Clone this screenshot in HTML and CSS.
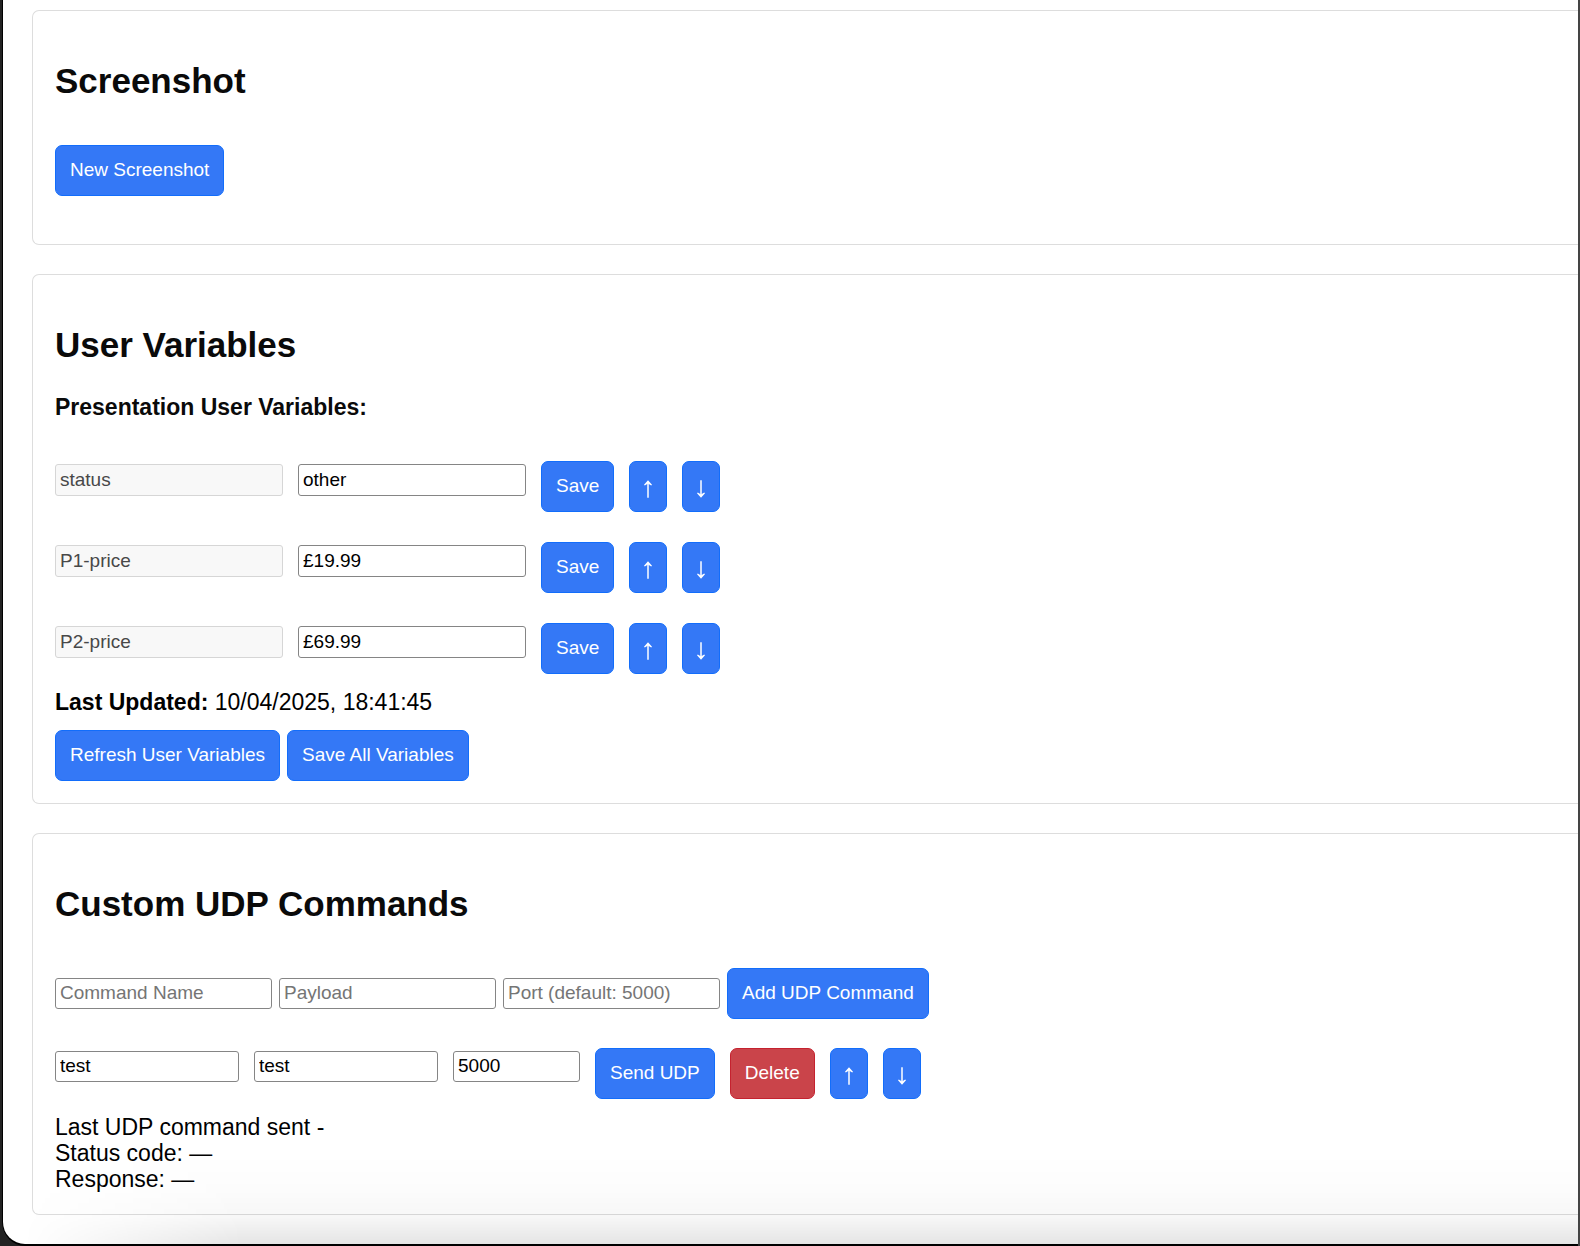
FILE: index.html
```html
<!DOCTYPE html>
<html lang="en">
<head>
<meta charset="utf-8">
<meta name="viewport" content="width=device-width, initial-scale=1">
<title>Presentation Control</title>
<link rel="stylesheet" href="styles.css">
</head>
<body>
<svg class="symbols" aria-hidden="true">
  <symbol id="arrow-up" viewBox="0 0 10 18">
    <path d="M5 17.8V2.5" fill="none" stroke="currentColor" stroke-width="1.5"/>
    <path d="M5 0.2 9 4.8 8.2 5.6 5 3.4 1.8 5.6 1 4.8Z" fill="currentColor"/>
  </symbol>
  <symbol id="arrow-down" viewBox="0 0 10 18">
    <path d="M5 0.2V15.5" fill="none" stroke="currentColor" stroke-width="1.5"/>
    <path d="M5 17.8 9 13.2 8.2 12.4 5 14.6 1.8 12.4 1 13.2Z" fill="currentColor"/>
  </symbol>
</svg>
<main class="window">
  <section class="panel">
    <h2 class="panel-title">Screenshot</h2>
    <div class="controls controls-only">
      <button type="button" class="btn">New Screenshot</button>
    </div>
  </section>

  <section class="panel">
    <h2 class="panel-title">User Variables</h2>
    <h3 class="panel-subtitle">Presentation User Variables:</h3>
    <div class="rows">
      <div class="row">
        <input class="field field-variable" type="text" value="status" aria-label="Variable name" disabled>
        <input class="field field-variable" type="text" value="other" aria-label="status value">
        <button type="button" class="btn">Save</button>
        <button type="button" class="btn btn-icon" aria-label="Move up"><svg class="arrow"><use href="#arrow-up"/></svg></button>
        <button type="button" class="btn btn-icon" aria-label="Move down"><svg class="arrow"><use href="#arrow-down"/></svg></button>
      </div>
      <div class="row">
        <input class="field field-variable" type="text" value="P1-price" aria-label="Variable name" disabled>
        <input class="field field-variable" type="text" value="£19.99" aria-label="P1-price value">
        <button type="button" class="btn">Save</button>
        <button type="button" class="btn btn-icon" aria-label="Move up"><svg class="arrow"><use href="#arrow-up"/></svg></button>
        <button type="button" class="btn btn-icon" aria-label="Move down"><svg class="arrow"><use href="#arrow-down"/></svg></button>
      </div>
      <div class="row">
        <input class="field field-variable" type="text" value="P2-price" aria-label="Variable name" disabled>
        <input class="field field-variable" type="text" value="£69.99" aria-label="P2-price value">
        <button type="button" class="btn">Save</button>
        <button type="button" class="btn btn-icon" aria-label="Move up"><svg class="arrow"><use href="#arrow-up"/></svg></button>
        <button type="button" class="btn btn-icon" aria-label="Move down"><svg class="arrow"><use href="#arrow-down"/></svg></button>
      </div>
    </div>
    <p class="status"><strong>Last Updated:</strong> 10/04/2025, 18:41:45</p>
    <div class="actions">
      <button type="button" class="btn">Refresh User Variables</button>
      <button type="button" class="btn">Save All Variables</button>
    </div>
  </section>

  <section class="panel">
    <h2 class="panel-title">Custom UDP Commands</h2>
    <form class="controls">
      <input class="field field-new" type="text" placeholder="Command Name" aria-label="Command Name">
      <input class="field field-new" type="text" placeholder="Payload" aria-label="Payload">
      <input class="field field-new" type="text" placeholder="Port (default: 5000)" aria-label="Port">
      <button type="button" class="btn">Add UDP Command</button>
    </form>
    <div class="row">
      <input class="field field-command" type="text" value="test" aria-label="Command name">
      <input class="field field-command" type="text" value="test" aria-label="Command payload">
      <input class="field field-port" type="text" value="5000" aria-label="Command port">
      <button type="button" class="btn">Send UDP</button>
      <button type="button" class="btn btn-danger">Delete</button>
      <button type="button" class="btn btn-icon" aria-label="Move up"><svg class="arrow"><use href="#arrow-up"/></svg></button>
      <button type="button" class="btn btn-icon" aria-label="Move down"><svg class="arrow"><use href="#arrow-down"/></svg></button>
    </div>
    <p class="status">Last UDP command sent -<br>Status code: —<br>Response: —</p>
  </section>
</main>
</body>
</html>
```
FILE: styles.css
```css
* {
  box-sizing: border-box;
}

body {
  margin: 0;
  padding: 0 2px 2px 3px;
  background: linear-gradient(to right, #222 50%, #444 50%);
  color: #000;
  font: 23px/26px "Liberation Sans", Arial, sans-serif;
}

.symbols {
  display: none;
}

.window {
  position: relative;
  display: flex;
  flex-direction: column;
  gap: 29px;
  padding: 10px 0 29px 29px;
  background: #fff;
  border-bottom-left-radius: 22px;
  box-shadow: -1px 0 0 #000, 0 2px 0 #000;
}

/* Soft shade along the lower edge of the window */
.window::after {
  content: "";
  position: absolute;
  inset: auto 0 0 0;
  height: 90px;
  border-bottom-left-radius: 22px;
  background: linear-gradient(to bottom, rgba(0, 0, 0, 0), rgba(0, 0, 0, 0.01) 40%, rgba(0, 0, 0, 0.03) 70%, rgba(0, 0, 0, 0.1));
  -webkit-mask-image: linear-gradient(to right, transparent 20px, #000 240px);
  mask-image: linear-gradient(to right, transparent 20px, #000 240px);
  pointer-events: none;
}

.panel {
  display: flex;
  flex-direction: column;
  padding: 22px;
  border: 1px solid #ddd;
  border-right: 0;
  border-radius: 7px 0 0 7px;
}

.panel-title {
  margin: 28px 0 29px;
  font-size: 35px;
  line-height: 40px;
  color: #0a0a0a;
}

.panel-subtitle {
  margin: 0 0 41px;
  font-size: 23px;
  line-height: 26px;
  color: #0a0a0a;
}

.controls {
  display: flex;
  flex-wrap: wrap;
  align-items: center;
  gap: 7px;
  margin: 15px 0 29px;
}

.controls-only {
  margin-bottom: 26px;
}

.rows {
  display: flex;
  flex-direction: column;
  gap: 30px;
}

.row {
  display: flex;
  flex-wrap: wrap;
  align-items: flex-start;
  gap: 15px;
}

.row .field {
  margin-top: 3px;
}

.status {
  margin: 15px 0 0;
}

.actions {
  display: flex;
  flex-wrap: wrap;
  gap: 7px;
  margin-top: 15px;
}

.field {
  height: 31px;
  padding: 0 4px 1px;
  border: 1px solid #858585;
  border-radius: 3px;
  background: #fff;
  color: #000;
  font: 19px/22px "Liberation Sans", Arial, sans-serif;
}

.field::placeholder {
  color: #757575;
}

.field:disabled {
  border-color: #d6d6d6;
  background: #f8f8f8;
  color: #484848;
}

.field-variable {
  width: 228px;
  height: 32px;
}

.field-new {
  width: 217px;
}

.field-command {
  width: 184px;
}

.field-port {
  width: 127px;
}

.btn {
  padding: 13px 14px 15px;
  border: 1px solid #126dfb;
  border-radius: 7px;
  background: #3478f6;
  color: #fff;
  font: 19px/21px "Liberation Sans", Arial, sans-serif;
  cursor: pointer;
}

.btn-icon {
  padding: 18px 13px 13px;
}

.arrow {
  display: block;
  width: 10px;
  height: 18px;
}

.btn-danger {
  border-color: #c5222f;
  background: #ca444a;
}
```
